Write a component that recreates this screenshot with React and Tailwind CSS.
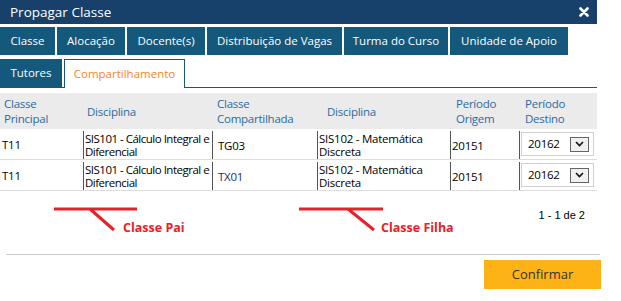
import React from 'react';

const tabsTop = [
  { label: 'Classe', w: 'w-[55px]' },
  { label: 'Alocação', w: 'w-[68px]' },
  { label: 'Docente(s)', w: 'w-[78px]' },
  { label: 'Distribuição de Vagas', w: 'w-[135px]' },
  { label: 'Turma do Curso', w: 'w-[104px]' },
  { label: 'Unidade de Apoio', w: 'w-[118px]' },
];

const rows = [
  { principal: 'T11', disc: 'SIS101 - Cálculo Integral e Diferencial', comp: 'TG03', disc2: 'SIS102 - Matemática Discreta', origem: '20151', destino: '20162', compColor: 'text-black' },
  { principal: 'T11', disc: 'SIS101 - Cálculo Integral e Diferencial', comp: 'TX01', disc2: 'SIS102 - Matemática Discreta', origem: '20151', destino: '20162', compColor: 'text-[#1c2b6b]' },
];

function Cell({ children, className = '' }) {
  return (
    <td className="p-0 align-top border-b border-[#dddddd]">
      <div className={`h-[28px] mt-[2px] border-l border-[#555] flex items-center leading-[13px] ${className}`}>
        {children}
      </div>
    </td>
  );
}

function SelectBox({ value }) {
  return (
    <div className="ml-px mt-[1px] w-[73px] h-[24px] border border-[#cfcfcf] flex items-center justify-between pl-[6px] pr-[4px]">
      <span>{value}</span>
      <div className="w-[19px] h-[15px] border border-[#666] bg-[#f0f0f0] flex items-center justify-center">
        <svg width="9" height="6" viewBox="0 0 9 6">
          <polyline points="1,1 4.5,4.5 8,1" fill="none" stroke="#111" strokeWidth="1.6" />
        </svg>
      </div>
    </div>
  );
}

export default function App() {
  return (
    <div className="w-[621px] h-[301px] bg-white overflow-hidden text-black" style={{ fontFamily: '"Open Sans", "Noto Sans", sans-serif' }}>
      <div className="w-[597px]">
        {/* Title bar */}
        <div className="h-[24px] bg-[#17416b] flex items-center justify-between pl-[10px] pr-[8px]">
          <span className="text-white text-[13.5px]">Propagar Classe</span>
          <svg width="10" height="10" viewBox="0 0 10 10">
            <path d="M1.5 1.5 L8.5 8.5 M8.5 1.5 L1.5 8.5" stroke="white" strokeWidth="2.6" strokeLinecap="round" />
          </svg>
        </div>

        {/* Tabs */}
        <div className="flex gap-[2px] mt-[3px]">
          {tabsTop.map(t => (
            <div key={t.label} className={`h-[28px] ${t.w} bg-[#14587c] text-white text-[11.5px] flex items-center justify-center whitespace-nowrap`}>{t.label}</div>
          ))}
        </div>
        <div className="flex items-end mt-[4px] border-b border-[#14587c]">
          <div className="h-[28px] w-[62px] bg-[#14587c] text-white text-[11.5px] flex items-center justify-center">Tutores</div>
          <div className="h-[29px] w-[121px] ml-[2px] -mb-px bg-white border border-b-0 border-[#14587c] text-[#f7861f] text-[11.5px] flex items-center justify-center">Compartilhamento</div>
        </div>

        {/* Table */}
        <table className="mt-[5px] w-[597px] table-fixed border-collapse text-[11.5px] tracking-[-0.25px]">
          <colgroup>
            <col className="w-[83px]" />
            <col className="w-[129px]" />
            <col className="w-[105px]" />
            <col className="w-[133px]" />
            <col className="w-[69px]" />
            <col className="w-[78px]" />
          </colgroup>
          <thead>
            <tr className="h-[36px] bg-[#ebebeb] text-[#2b6aa0] text-[11.5px] leading-[15px] text-left">
              <th className="font-normal pl-[4px]">Classe<br />Principal</th>
              <th className="font-normal pl-[4px]">Disciplina</th>
              <th className="font-normal pl-[5px]">Classe<br />Compartilhada</th>
              <th className="font-normal pl-[10px]">Disciplina</th>
              <th className="font-normal pl-[6px]">Período<br />Origem</th>
              <th className="font-normal pl-[6px]">Período<br />Destino</th>
            </tr>
          </thead>
          <tbody>
            {rows.map((r, i) => (
              <tr key={i}>
                <td className="p-0 align-top border-b border-[#dddddd]">
                  <div className="h-[28px] mt-[2px] flex items-center pl-[2px]">{r.principal}</div>
                </td>
                <Cell className="pl-px tracking-[-0.5px]">{r.disc}</Cell>
                <Cell className={`pl-[5px] ${r.compColor}`}>{r.comp}</Cell>
                <Cell className="pl-px">{r.disc2}</Cell>
                <Cell className="pl-px">{r.origem}</Cell>
                <td className="p-0 align-top border-b border-[#dddddd]">
                  <div className="h-[28px] mt-[2px] border-l border-[#555] flex items-start">
                    <SelectBox value={r.destino} />
                  </div>
                </td>
              </tr>
            ))}
          </tbody>
        </table>

        {/* Annotations + pagination */}
        <div className="relative h-[63px]">
          <div className="flex justify-end pr-[12px] pt-[16px] text-[11px]" style={{ fontFamily: '"Liberation Sans", sans-serif' }}>1 - 1 de 2</div>
          <svg className="absolute left-0 top-0" width="400" height="50" viewBox="0 0 400 50">
            <path d="M54 18 H137 M90 18 L114 39" stroke="#e8202a" strokeWidth="3" fill="none" />
            <path d="M299 18 H383 M348 18 L374 39" stroke="#e8202a" strokeWidth="3" fill="none" />
          </svg>
          <span className="absolute left-[123px] top-[28px] text-[#e8202a] font-bold text-[12.5px]">Classe Pai</span>
          <span className="absolute left-[381px] top-[28px] text-[#e8202a] font-bold text-[12.5px]">Classe Filha</span>
        </div>
      </div>

      {/* Footer */}
      <div className="ml-[6px] w-[594px] border-t border-[#cccccc]" />
      <div className="flex justify-end w-[601px] mt-[5px]">
        <button className="w-[117px] h-[29px] bg-[#fdb316] text-[#333] text-[13px]">Confirmar</button>
      </div>
    </div>
  );
}
